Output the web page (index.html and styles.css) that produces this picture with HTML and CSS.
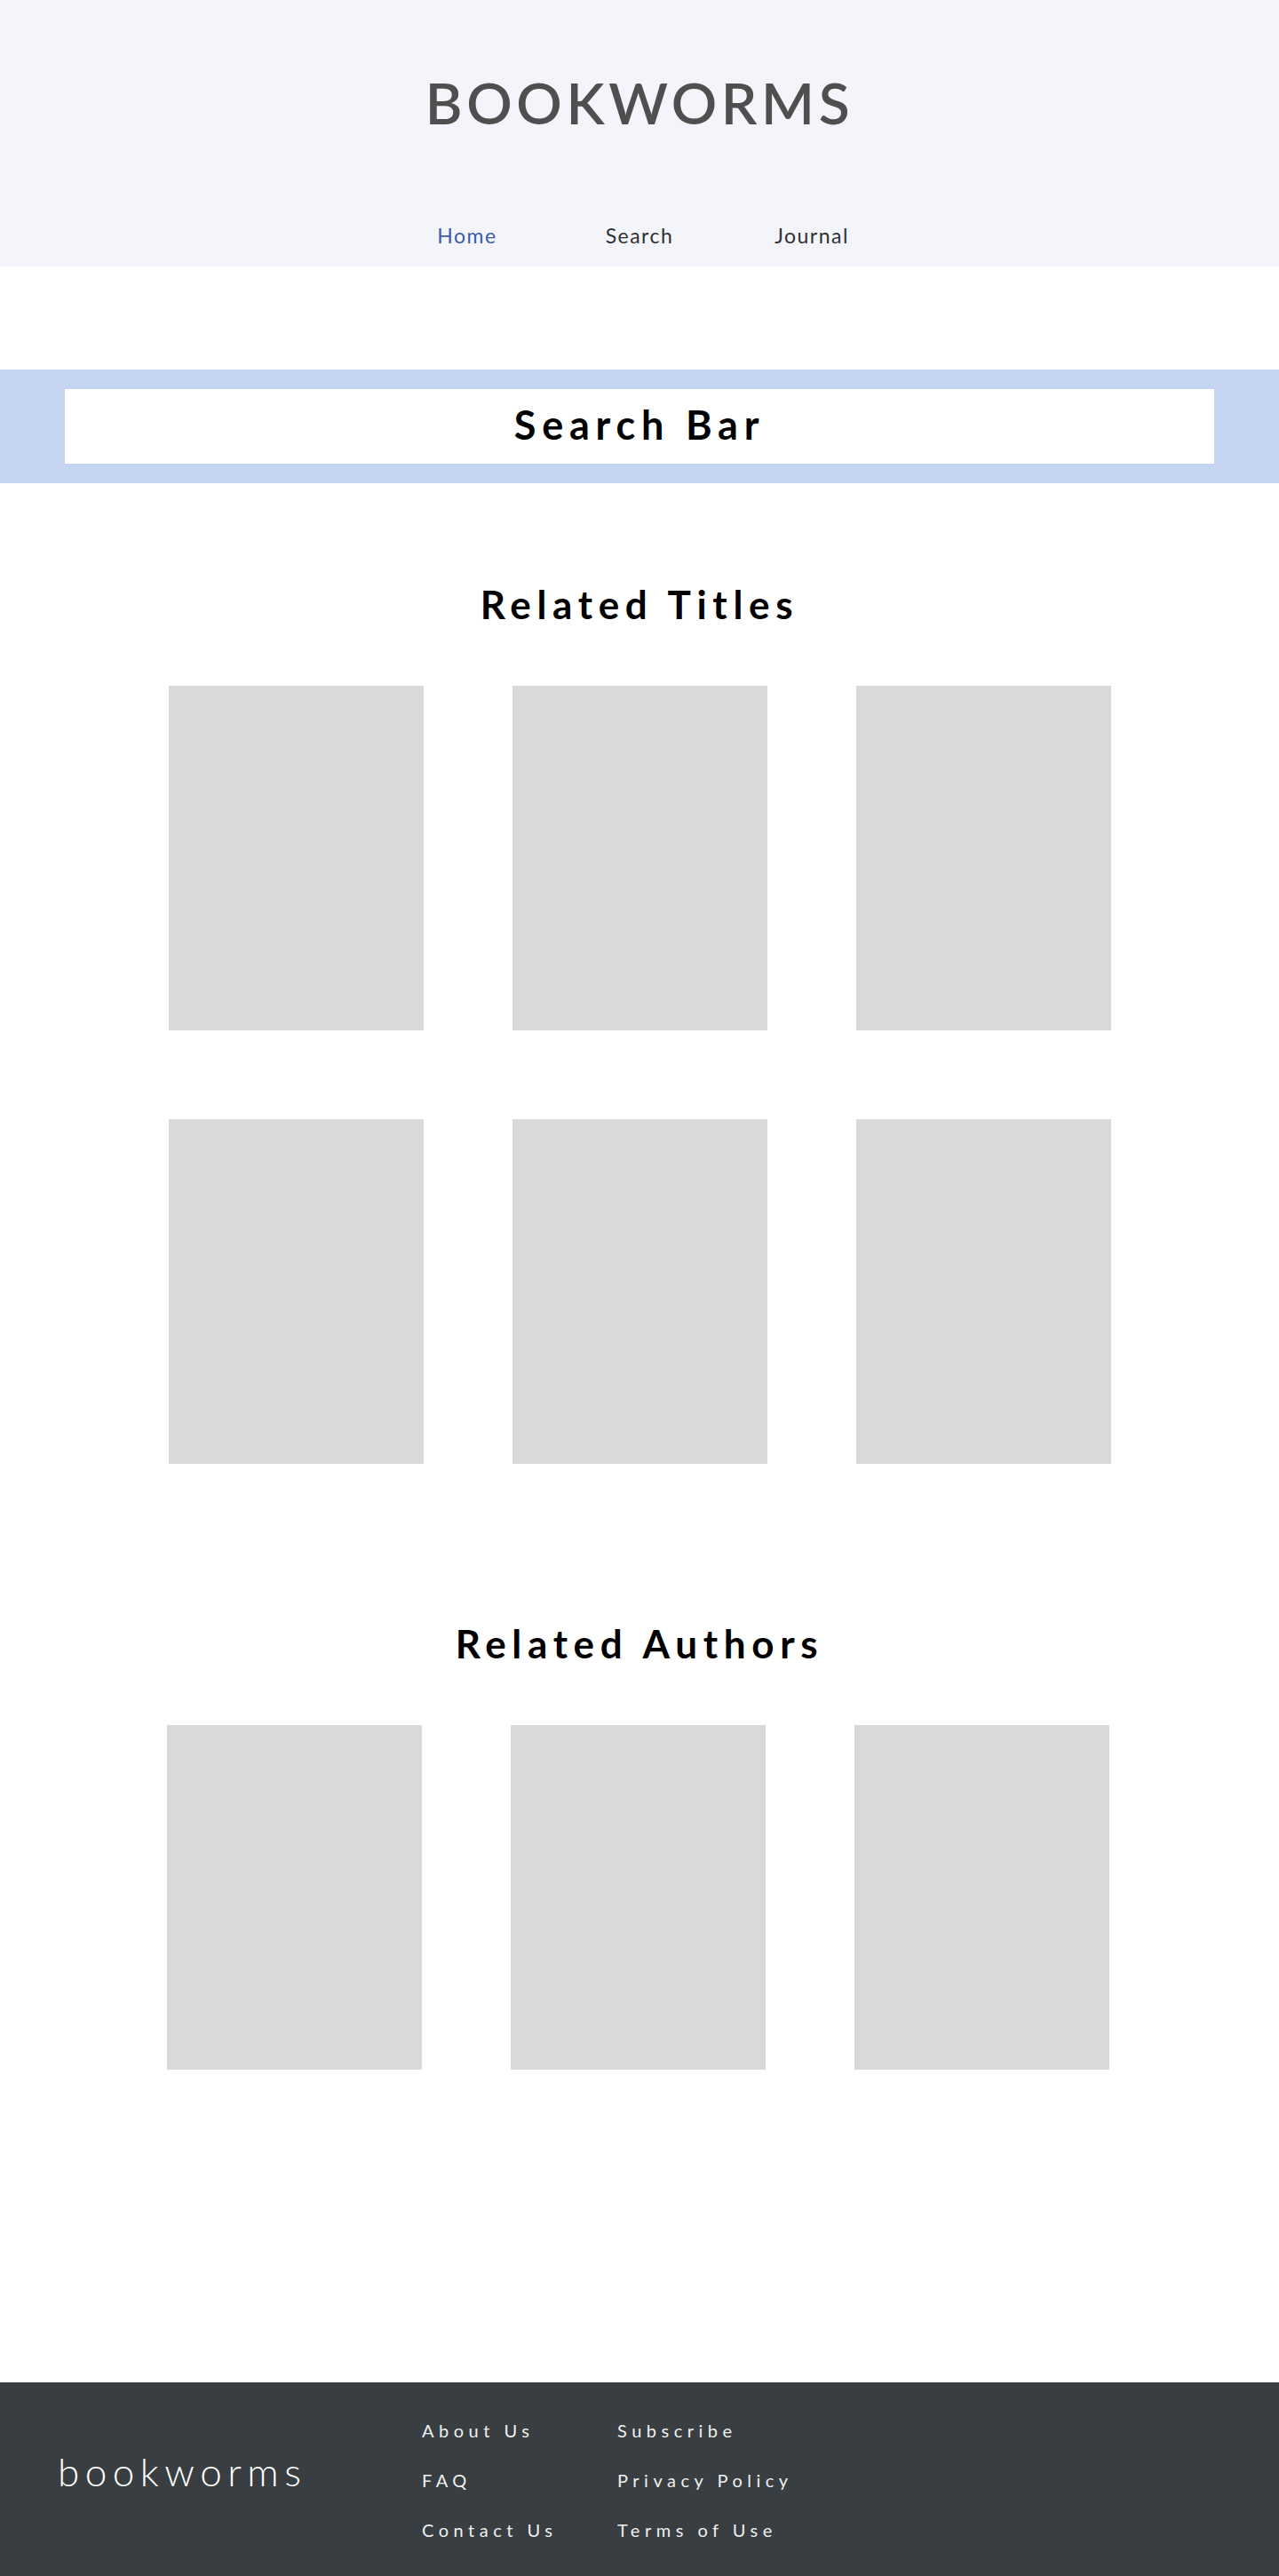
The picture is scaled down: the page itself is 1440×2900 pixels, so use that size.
FILE: index.html
```html
<!DOCTYPE html>
<html lang="en">
<head>
<meta charset="utf-8">
<title>Bookworms</title>
<link rel="stylesheet" href="styles.css">
</head>
<body>
<header class="site-header">
  <h1 class="brand">BOOKWORMS</h1>
  <nav class="main-nav">
    <a class="nav-link active" href="#">Home</a>
    <a class="nav-link" href="#">Search</a>
    <a class="nav-link" href="#">Journal</a>
  </nav>
</header>

<section class="search-band">
  <div class="search-box">Search Bar</div>
</section>

<section class="related titles">
  <h2 class="section-title">Related Titles</h2>
  <div class="card-grid">
    <div class="card"></div>
    <div class="card"></div>
    <div class="card"></div>
    <div class="card"></div>
    <div class="card"></div>
    <div class="card"></div>
  </div>
</section>

<section class="related authors">
  <h2 class="section-title">Related Authors</h2>
  <div class="card-grid shifted">
    <div class="card"></div>
    <div class="card"></div>
    <div class="card"></div>
  </div>
</section>

<footer class="site-footer">
  <div class="footer-logo">bookworms</div>
  <div class="footer-links">
    <a href="#">About Us</a>
    <a href="#">Subscribe</a>
    <a href="#">FAQ</a>
    <a href="#">Privacy Policy</a>
    <a href="#">Contact Us</a>
    <a href="#">Terms of Use</a>
  </div>
</footer>
</body>
</html>
```

FILE: styles.css
```css
* { box-sizing: border-box; }
html, body { margin: 0; padding: 0; }
body {
  font-family: Lato, "Noto Sans", "Liberation Sans", sans-serif;
  background: #ffffff;
  color: #000;
  width: 1440px;
}
a { text-decoration: none; color: inherit; }

.site-header {
  background: #f4f5fa;
  height: 300px;
  padding-top: 78px;
  display: flex;
  flex-direction: column;
  align-items: center;
}
.brand {
  margin: 0;
  font-size: 64px;
  line-height: 1.2;
  font-weight: 600;
  letter-spacing: 4.6px;
  color: #4f4f4f;
}
.main-nav {
  margin-top: 97px;
  display: flex;
  justify-content: center;
}
.nav-link {
  width: 194px;
  text-align: center;
  font-size: 23px;
  line-height: 1.2;
  letter-spacing: 1.5px;
  color: #2f3033;
}
.nav-link.active { color: #3d5ca8; }

.search-band {
  margin-top: 116px;
  background: #c5d4f0;
  padding: 22px 73px;
}
.search-box {
  background: #ffffff;
  height: 84px;
  display: flex;
  align-items: center;
  justify-content: center;
  font-size: 45px;
  font-weight: 700;
  letter-spacing: 6.8px;
  padding-bottom: 4px;
}

.related { display: flex; flex-direction: column; align-items: center; }
.titles { margin-top: 110px; }
.authors { margin-top: 176px; }
.section-title {
  margin: 0;
  font-size: 44px;
  line-height: 1.2;
  font-weight: 700;
  letter-spacing: 6.7px;
}
.card-grid {
  margin-top: 65px;
  display: grid;
  grid-template-columns: repeat(3, 287px);
  column-gap: 100px;
  row-gap: 100px;
}
.card-grid.shifted { transform: translateX(-2px); }
.card { height: 388px; background: #d9d9d9; }

.site-footer {
  margin-top: 352px;
  height: 218px;
  background: #383e41;
  color: #ffffff;
  display: flex;
  align-items: flex-start;
  padding: 42px 0 0 65px;
}
.footer-logo {
  width: 410px;
  margin-top: 32px;
  font-size: 44px;
  line-height: 1.2;
  font-weight: 300;
  letter-spacing: 6.5px;
}
.footer-links {
  display: grid;
  grid-template-columns: 220px auto;
  row-gap: 32px;
}
.footer-links a {
  font-size: 20px;
  line-height: 24px;
  letter-spacing: 5.5px;
  color: #f0f0f0;
}
```
